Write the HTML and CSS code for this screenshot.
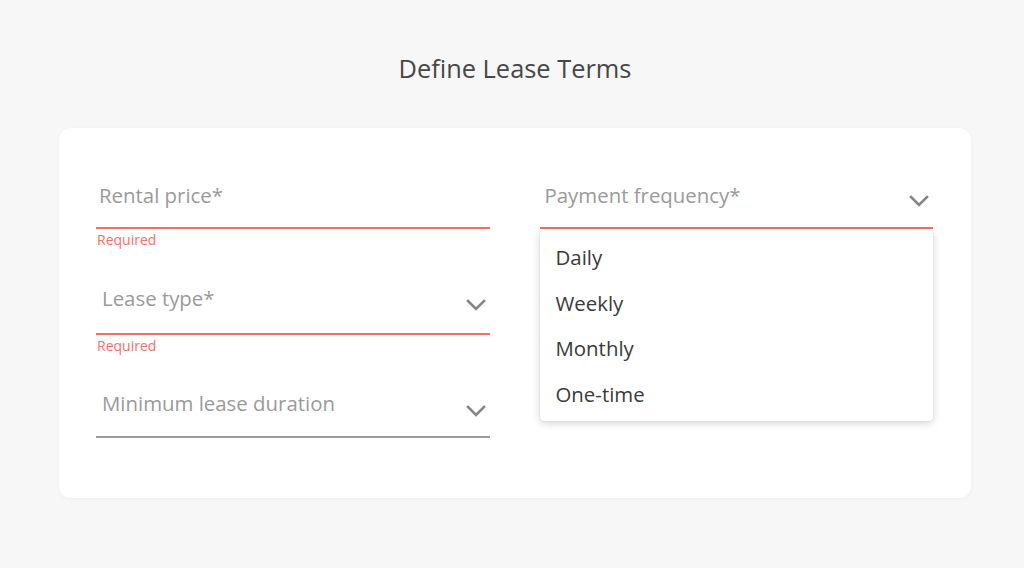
FILE: index.html
```html
<!DOCTYPE html>
<html lang="en">
<head>
<meta charset="utf-8">
<title>Define Lease Terms</title>
<link rel="stylesheet" href="styles.css">
</head>
<body>
<main class="page">
  <h1 class="title">Define Lease Terms</h1>
  <section class="card">
    <div class="col">
      <div class="field field--error field--first">
        <div class="row row--input"><span class="label">Rental price*</span></div>
        <div class="helper">Required</div>
      </div>
      <div class="field field--error field--second">
        <div class="row row--select"><span class="label">Lease type*</span>
          <svg class="chev" viewBox="0 0 20 12" width="20" height="12"><path d="M2 2 L10 10 L18 2"/></svg>
        </div>
        <div class="helper">Required</div>
      </div>
      <div class="field field--last">
        <div class="row row--select row--plain"><span class="label">Minimum lease duration</span>
          <svg class="chev" viewBox="0 0 20 12" width="20" height="12"><path d="M2 2 L10 10 L18 2"/></svg>
        </div>
      </div>
    </div>
    <div class="col">
      <div class="field field--error field--open">
        <div class="row row--select row--right"><span class="label">Payment frequency*</span>
          <svg class="chev" viewBox="0 0 20 12" width="20" height="12"><path d="M2 2 L10 10 L18 2"/></svg>
        </div>
        <ul class="menu">
          <li class="menu-item">Daily</li>
          <li class="menu-item">Weekly</li>
          <li class="menu-item">Monthly</li>
          <li class="menu-item">One-time</li>
        </ul>
      </div>
    </div>
  </section>
</main>
</body>
</html>
```

FILE: styles.css
```css
* { box-sizing: border-box; }
html, body { margin: 0; padding: 0; }
body {
  background: #f7f7f7;
  font-family: "Open Sans", "Noto Sans", "DejaVu Sans", sans-serif;
  color: #444;
  height: 568px;
  overflow: hidden;
}
.page {
  margin: 0 53px 0 59px;
  padding-top: 51px;
}
.title {
  margin: 0 0 43px;
  font-size: 25.4px;
  line-height: 34px;
  font-weight: 400;
  color: #474747;
  text-align: center;
}
.card {
  background: #fff;
  border-radius: 12px;
  box-shadow: 0 1px 4px rgba(0,0,0,0.04);
  padding: 53px 38px 60px 37px;
  display: grid;
  grid-template-columns: 1fr 1fr;
  column-gap: 50px;
}
.col { display: flex; flex-direction: column; }
.field { position: relative; }
.field--first { margin-bottom: 37px; }
.field--second { margin-bottom: 34px; }
.field--last { margin-bottom: 0; }
.row {
  height: 48px;
  border-bottom: 2px solid #9c9c9c;
  display: flex;
  align-items: flex-start;
  justify-content: space-between;
  padding-left: 6px;
  padding-right: 4px;
}
.row--input { padding-left: 3px; }
.row--right { padding-left: 5px; }
.field--error .row { border-bottom-color: #f36f6a; }
.label {
  font-size: 20.4px;
  line-height: 28px;
  color: #9a9a9a;
}
.row--select .label { line-height: 26px; }
.field--second .label { line-height: 23px; }
.row--right .label { line-height: 29px; }
.chev {
  margin-top: 14px;
  fill: none;
  stroke: #858585;
  stroke-width: 2.6;
  stroke-linecap: square;
}
.field--second .chev { margin-top: 12px; }
.row--plain .chev { margin-top: 15px; }
.helper {
  font-size: 14px;
  line-height: 20px;
  padding-top: 1px;
  color: #f36f6a;
  padding-left: 1px;
}
.menu {
  position: absolute;
  left: 0;
  right: 0;
  top: 49px;
  margin: 0;
  list-style: none;
  background: #fff;
  border-radius: 4px;
  box-shadow: 0 2px 8px rgba(0,0,0,0.18), 0 0 1px rgba(0,0,0,0.2);
  padding: 5px 0 4px;
  z-index: 2;
}
.menu-item {
  height: 45.6px;
  line-height: 45.6px;
  padding-left: 16px;
  font-size: 20.4px;
  color: #3a3a3a;
}
```
